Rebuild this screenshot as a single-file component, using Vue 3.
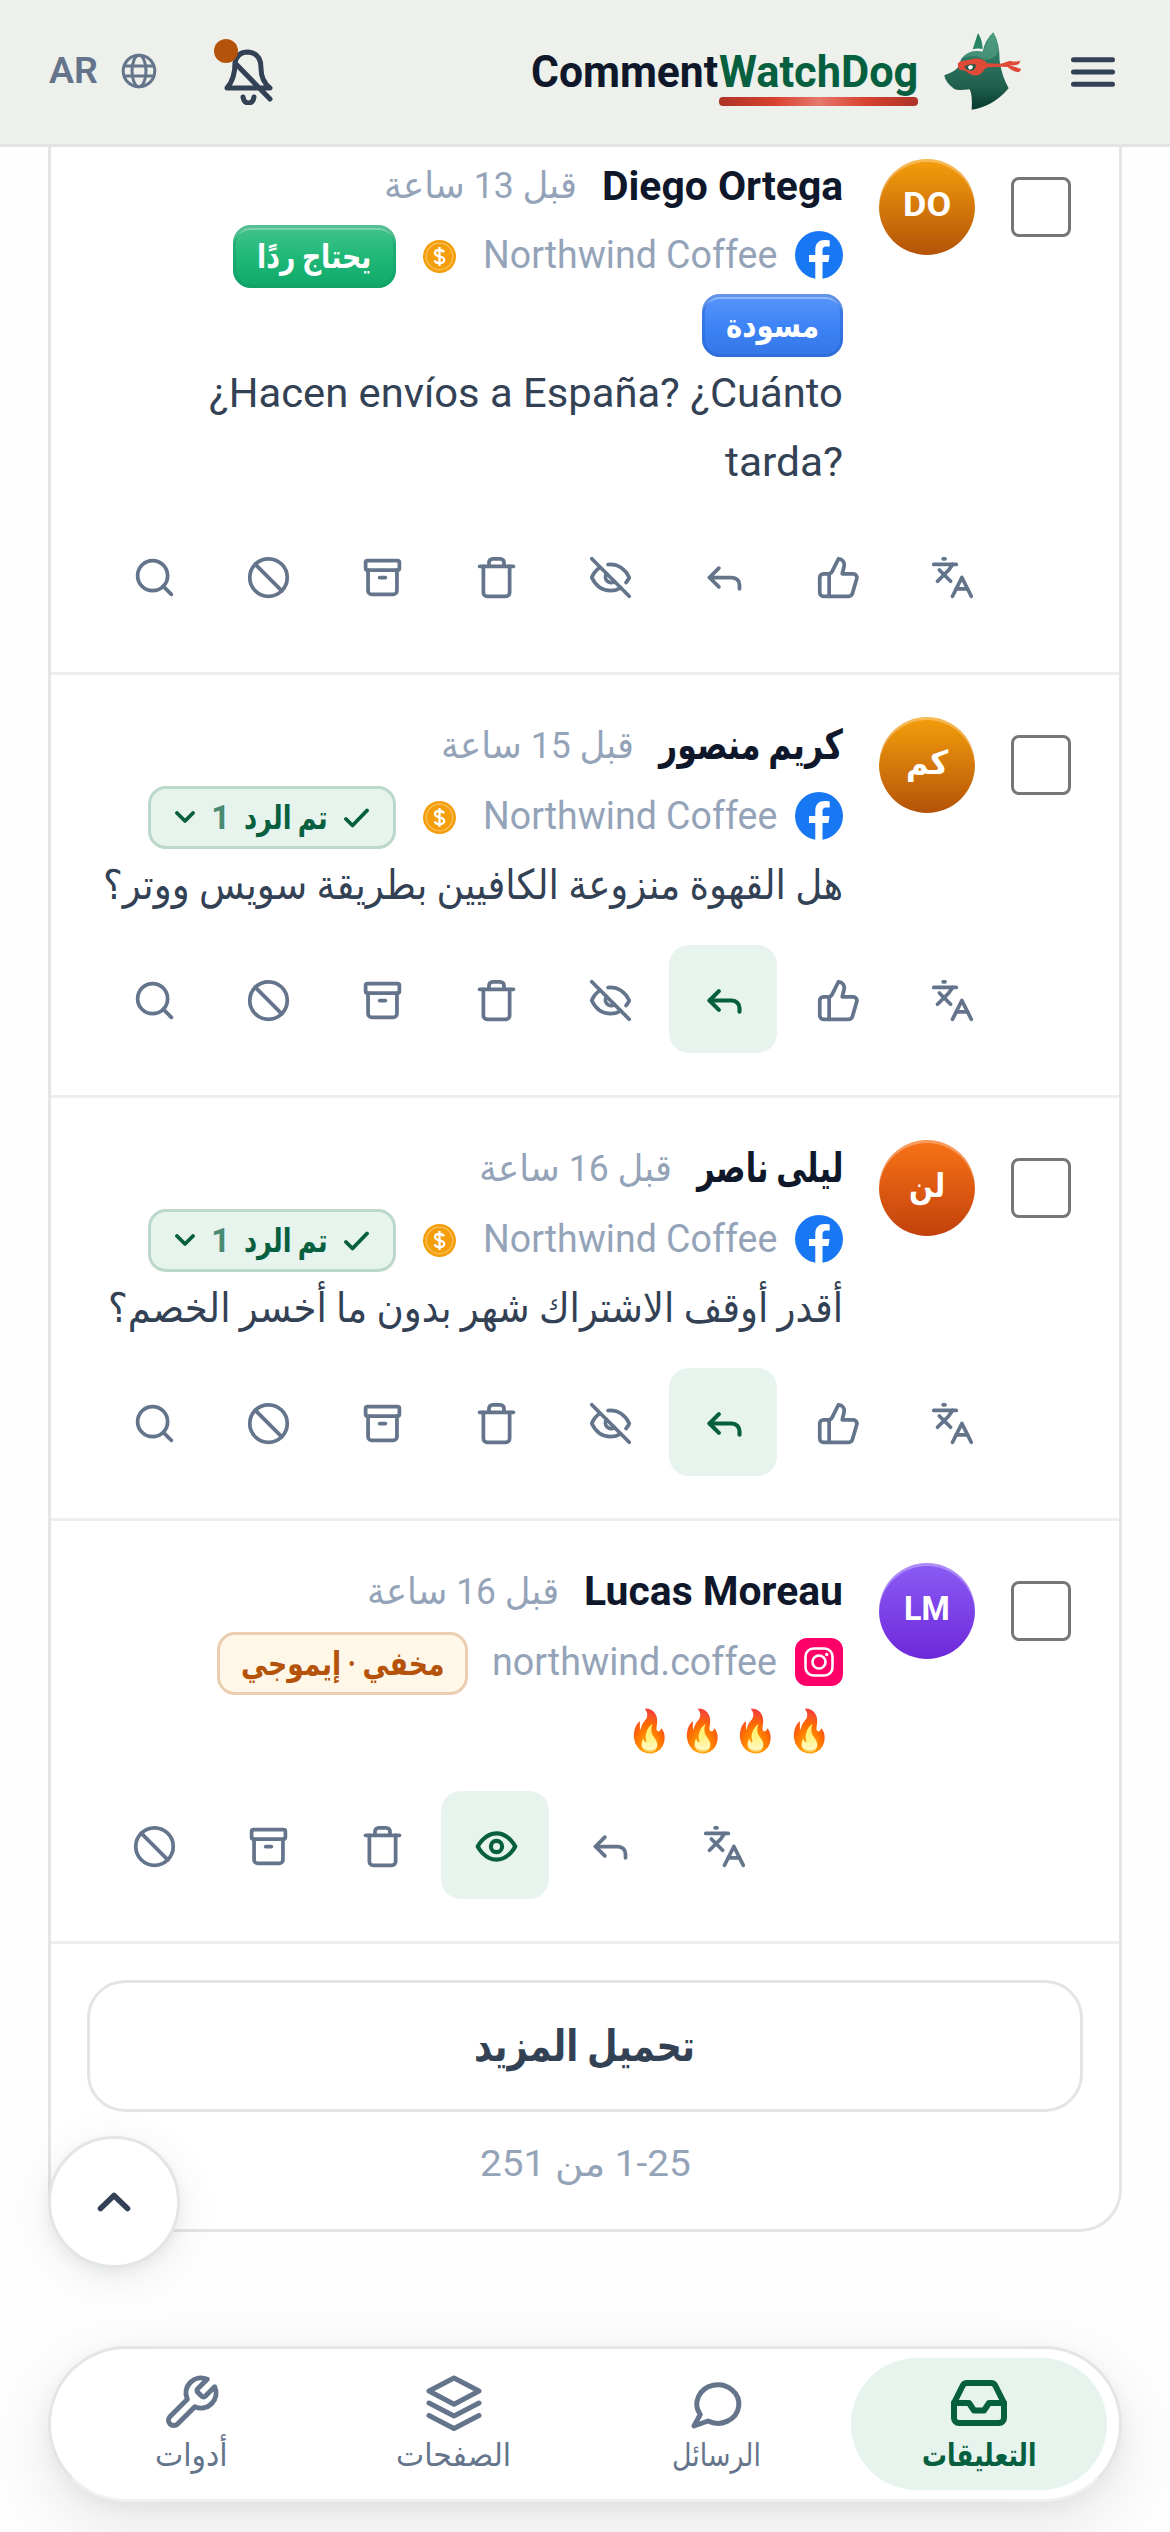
<script setup>
const vFit = (el, { value }) => {
  el.style.transform = 'none'
  el.style.marginLeft = '0'
  const natural = el.offsetWidth
  if (!natural) return
  el.style.transform = `scaleX(${value / natural})`
  el.style.marginLeft = `${value - natural}px`
}

const icons = {
  search: ['M11 3a8 8 0 1 0 0 16a8 8 0 1 0 0-16', 'm21 21-4.3-4.3'],
  ban: ['M12 2a10 10 0 1 0 0 20a10 10 0 1 0 0-20', 'm4.9 4.9 14.2 14.2'],
  archive: ['M4 3h16a1 1 0 0 1 1 1v3a1 1 0 0 1-1 1H4a1 1 0 0 1-1-1V4a1 1 0 0 1 1-1Z', 'M4.3 8v11a2 2 0 0 0 2 2h11.4a2 2 0 0 0 2-2V8', 'M10.5 12h3'],
  trash: ['M3 6h18', 'M19 6v14a2 2 0 0 1-2 2H7a2 2 0 0 1-2-2V6', 'M8 6V4a2 2 0 0 1 2-2h4a2 2 0 0 1 2 2v2'],
  eyeOff: ['M10.7 5.1C15.9 4.6 19.9 7.6 22 12c-.4 1-1 1.9-1.7 2.7', 'M6.3 6.7C4.4 8 2.9 9.8 2 12c2.1 4.4 5.7 7 10 7c2 0 3.8-.5 5.4-1.5', 'M9.9 9.9a3 3 0 0 0 4.2 4.2', 'm2 2 20 20'],
  eye: ['M2 12s3.5-7 10-7 10 7 10 7-3.5 7-10 7-10-7-10-7Z', 'M12 9a3 3 0 1 0 0 6a3 3 0 1 0 0-6'],
  reply: ['m9 17-5-5 5-5', 'M20 18v-2a4 4 0 0 0-4-4H4'],
  like: ['M7 10v12', 'M15 5.88 14 10h5.83a2 2 0 0 1 1.92 2.56l-2.33 8A2 2 0 0 1 17.5 22H4a2 2 0 0 1-2-2v-8a2 2 0 0 1 2-2h2.76a2 2 0 0 0 1.79-1.11L12 2a3.13 3.13 0 0 1 3 3.88Z'],
  translate: ['m5 8 6 6', 'm4 14 6-6 2-3', 'M2 5h12', 'M7 2h1', 'm22 22-5-10-5 10', 'M14 18h6'],
  inbox: ['M22 12h-6l-2 3h-4l-2-3H2', 'M5.45 5.11 2 12v6a2 2 0 0 0 2 2h16a2 2 0 0 0 2-2v-6l-3.45-6.89A2 2 0 0 0 16.76 4H7.24a2 2 0 0 0-1.79 1.11z'],
  chat: ['M3.2 21.2 5.7 16.6A8.4 7.7 0 1 1 8.8 19.2Z'],
  layers: ['m12 2 10 5.2-10 5.3L2 7.2Z', 'm2 12 10 5.2L22 12', 'm2 17 10 5.2L22 17'],
  wrench: ['M14.7 6.3a1 1 0 0 0 0 1.4l1.6 1.6a1 1 0 0 0 1.4 0l3.77-3.77a6 6 0 0 1-7.94 7.94l-6.91 6.91a2.12 2.12 0 0 1-3-3l6.91-6.91a6 6 0 0 1 7.94-7.94l-3.76 3.76z'],
}

const allActions = ['translate', 'like', 'reply', 'eyeOff', 'trash', 'archive', 'ban', 'search']

const comments = [
  {
    name: 'Diego Ortega', nameWidth: 241, time: 'قبل 13 ساعة', timeWidth: 193,
    initials: 'DO', initialsWidth: 48, tone: 'amber', network: 'facebook',
    page: 'Northwind Coffee', pageWidth: 294, ad: true, tight: true,
    badges: [{ kind: 'needs', text: 'يحتاج ردًا', width: 114 }, { kind: 'draft', text: 'مسودة', width: 93 }],
    lines: [{ text: '¿Hacen envíos a España? ¿Cuánto', width: 634 }, { text: 'tarda?', width: 118 }],
    actions: allActions, active: '',
  },
  {
    name: 'كريم منصور', nameWidth: 184, time: 'قبل 15 ساعة', timeWidth: 193,
    initials: 'كم', initialsWidth: 42, tone: 'amber', network: 'facebook',
    page: 'Northwind Coffee', pageWidth: 294, ad: true,
    badges: [{ kind: 'replied', text: 'تم الرد', width: 84 }],
    lines: [{ text: 'هل القهوة منزوعة الكافيين بطريقة سويس ووتر؟', width: 740 }],
    actions: allActions, active: 'reply',
  },
  {
    name: 'ليلى ناصر', nameWidth: 146, time: 'قبل 16 ساعة', timeWidth: 193,
    initials: 'لن', initialsWidth: 36, tone: 'orange', network: 'facebook',
    page: 'Northwind Coffee', pageWidth: 294, ad: true,
    badges: [{ kind: 'replied', text: 'تم الرد', width: 84 }],
    lines: [{ text: 'أقدر أوقف الاشتراك شهر بدون ما أخسر الخصم؟', width: 735 }],
    actions: allActions, active: 'reply',
  },
  {
    name: 'Lucas Moreau', nameWidth: 259, time: 'قبل 16 ساعة', timeWidth: 192,
    initials: 'LM', initialsWidth: 46, tone: 'violet', network: 'instagram',
    page: 'northwind.coffee', pageWidth: 285, ad: false,
    badges: [{ kind: 'hidden', text: 'مخفي · إيموجي', width: 203 }],
    lines: [{ text: '🔥 🔥 🔥 🔥', width: 205, emoji: true }],
    actions: ['translate', 'reply', 'eye', 'trash', 'archive', 'ban'], active: 'eye',
  },
]

const tabs = [
  { icon: 'inbox', text: 'التعليقات', width: 114, active: true },
  { icon: 'chat', text: 'الرسائل', width: 89 },
  { icon: 'layers', text: 'الصفحات', width: 115 },
  { icon: 'wrench', text: 'أدوات', width: 73 },
]
</script>

<template>
  <div class="screen" dir="rtl">
    <header class="topbar">
      <svg class="menu" viewBox="0 0 44 30"><path d="M2.5 2.7h39M2.5 15h39M2.5 27.3h39" /></svg>
      <svg class="dog" viewBox="45 38 234 234">
        <defs>
          <linearGradient id="fur" x1="0" y1="0" x2="0" y2="1">
            <stop offset="0" stop-color="#3b9478" /><stop offset=".45" stop-color="#286f5a" /><stop offset=".7" stop-color="#20604d" /><stop offset="1" stop-color="#07392e" />
          </linearGradient>
          <linearGradient id="ear" x1="0" y1="0" x2="0" y2="1">
            <stop offset="0" stop-color="#1d7a5c" /><stop offset="1" stop-color="#2c8b6b" />
          </linearGradient>
        </defs>
        <path d="M147 41 131 90q15-5 30-1Q160 62 147 41Z" fill="url(#ear)" />
        <path d="M193 39Q168 62 161 97Q120 88 97 118L87 143Q80 156 46 168Q48 183 62 197L76 209Q84 214 122 210Q131 228 128 271Q191 263 239 207Q219 172 212 125Q212 70 193 39Z" fill="url(#fur)" />
        <path d="M193 43Q171 66 164 98Q120 91 101 115Q145 102 166 122Q198 120 207 98Q206 66 193 43Z" fill="#68b197" opacity=".4" />
        <path d="M87 132Q89 125 122 121Q145 114 161 121Q171 125 173 132L216 133L243 124Q258 129 274 124L270 134Q258 140 238 138Q263 143 277 149L270 159Q249 156 236 143L217 142L177 144Q168 146 163 155Q150 174 128 166Q116 163 110 154L91 151Q85 147 87 132Z" fill="#df4a38" />
        <path d="M106 144Q115 132 139 135Q143 145 133 152Q118 158 106 144Z" fill="#1d5548" />
        <path d="m116 142 8-5 8 3-2 8-9 3Z" fill="#fff" />
      </svg>
      <div class="wordmark" dir="ltr">
        <span class="dark"><span v-fit="187">Comment</span></span><span class="green"><span v-fit="199">WatchDog</span></span>
      </div>
      <div class="bell">
        <svg viewBox="0 0 60 66">
          <path d="M21 24Q23 13 34 13Q47 14 47 29Q47 42 56 49H13Q21 40 21 24M21 24 56 60M29 58Q30 64 34.5 64Q39 64 40 58" />
        </svg>
        <i class="dot"></i>
      </div>
      <svg class="globe" viewBox="0 0 36 36">
        <circle cx="18" cy="18" r="15.8" /><ellipse cx="18" cy="18" rx="7" ry="15.8" /><path d="M3 13h30M3 23h30" />
      </svg>
      <span class="lang"><span v-fit="49">AR</span></span>
    </header>

    <main class="feed">
      <article v-for="c in comments" :key="c.initials" class="comment">
        <div class="top">
          <i class="check"></i>
          <div class="avatar" :class="c.tone"><span v-fit="c.initialsWidth">{{ c.initials }}</span></div>
          <div class="body">
            <div class="who" :class="{ tight: c.tight }">
              <strong v-fit="c.nameWidth" dir="auto">{{ c.name }}</strong>
              <span v-fit="c.timeWidth" class="time">{{ c.time }}</span>
            </div>
            <div class="meta">
              <svg v-if="c.network === 'facebook'" class="network" viewBox="0 0 48 48">
                <circle cx="24" cy="24" r="24" fill="#1877f2" />
                <path d="M20.3 48V31H14v-7h6.3v-5.5C20.3 12.2 24 9 29.7 9c2.6 0 4.3.3 5 .5v6h-3.2c-3.3 0-4 1.7-4 4V24h7l-1.1 7h-5.9v17Z" fill="#fff" />
              </svg>
              <svg v-else class="network" viewBox="0 0 48 48">
                <rect width="48" height="48" rx="12" fill="#ff0069" />
                <rect x="10.5" y="10.5" width="27" height="27" rx="8" fill="none" stroke="#fff" stroke-width="2.6" />
                <circle cx="24" cy="24" r="6.5" fill="none" stroke="#fff" stroke-width="2.6" />
                <circle cx="31.7" cy="16.5" r="1.7" fill="#fff" />
              </svg>
              <span v-fit="c.pageWidth" class="page" dir="ltr">{{ c.page }}</span>
              <svg v-if="c.ad" class="coin" viewBox="0 0 33 33">
                <circle cx="16.5" cy="16.5" r="16.5" fill="#f59e0b" />
                <circle cx="16.5" cy="16.5" r="13.3" fill="none" stroke="#fbc15c" stroke-width="1.3" />
                <path d="M21 12.3Q20 10 16.5 10Q12 10 12 13Q12 15.5 16.5 16.3Q21.2 17.2 21.2 20Q21.2 23 16.5 23Q12.5 23 11.7 20.3M16.5 7v19" fill="none" stroke="#fff" stroke-width="2.3" />
              </svg>
              <span v-for="b in c.badges" :key="b.kind" class="badge" :class="b.kind">
                <svg v-if="b.kind === 'replied'" class="tick" viewBox="0 0 25 20"><path d="m2 11 6.5 6.5L23 2.5" /></svg>
                <span v-fit="b.width">{{ b.text }}</span>
                <template v-if="b.kind === 'replied'">
                  <span class="count">1</span>
                  <svg class="caret" viewBox="0 0 20 13"><path d="m2 2 8 8 8-8" /></svg>
                </template>
              </span>
            </div>
            <p class="text" dir="auto">
              <span v-for="l in c.lines" :key="l.text" class="line" :class="{ emoji: l.emoji }"><span v-fit="l.width">{{ l.text }}</span></span>
            </p>
          </div>
        </div>
        <div class="actions">
          <button v-for="a in c.actions" :key="a" :class="{ on: a === c.active }">
            <svg viewBox="0 0 24 24"><path v-for="d in icons[a]" :key="d" :d="d" /></svg>
          </button>
        </div>
      </article>
      <footer class="more">
        <button class="load"><span v-fit="221">تحميل المزيد</span></button>
        <div class="range"><span v-fit="211">1-25 من 251</span></div>
      </footer>
    </main>

    <button class="to-top"><svg viewBox="0 0 34 20"><path d="m3.5 16.5 13.5-13 13.5 13" /></svg></button>

    <nav class="tabs">
      <a v-for="t in tabs" :key="t.icon" :class="{ on: t.active }">
        <svg viewBox="0 0 24 24"><path v-for="d in icons[t.icon]" :key="d" :d="d" /></svg>
        <span class="label"><span v-fit="t.width">{{ t.text }}</span></span>
      </a>
    </nav>
  </div>
</template>

<style>
html, body { background: #fefefe; overflow: hidden; }
</style>

<style scoped>
* { box-sizing: border-box; }
.screen {
  position: relative;
  width: 1170px;
  height: 2532px;
  overflow: hidden;
  font-family: Roboto, 'DejaVu Sans', 'Noto Color Emoji', sans-serif;
  color: #334155;
}
.screen span, .screen strong { white-space: nowrap; }
.who strong, .screen span span, .time, .page, .avatar span, .load span, .range span { display: inline-block; flex: none; transform-origin: right center; }
button { border: 0; background: none; padding: 0; font-family: inherit; }
svg { display: block; flex: none; }

.topbar {
  position: relative;
  z-index: 2;
  display: flex;
  align-items: center;
  height: 147px;
  padding: 0 55px 3px 49px;
  background: #edf0eb;
  border-bottom: 3px solid #e2e5e1;
}
.menu { width: 44px; height: 30px; margin-top: 3px; fill: none; stroke: #334155; stroke-width: 5; stroke-linecap: round; }
.dog { width: 78px; height: 78px; margin-right: 49px; }
.wordmark { display: flex; margin-right: 26px; margin-top: 3px; font-size: 44px; font-weight: 700; line-height: 60px; }
.dark { color: #0f172a; }
.green { position: relative; color: #065f3f; }
.green::after {
  content: '';
  position: absolute;
  z-index: -1;
  left: 0;
  right: 0;
  bottom: -4px;
  height: 9px;
  border-radius: 4px;
  background: linear-gradient(90deg, #ad3327, #d8412f 28%, #e5786c 50%, #d8412f 74%, #ad3327);
}
.bell { position: relative; width: 60px; height: 66px; margin-right: auto; margin-top: 2px; }
.bell svg { width: 60px; height: 66px; fill: none; stroke: #334155; stroke-width: 5; stroke-linecap: round; stroke-linejoin: round; }
.dot { position: absolute; left: 0; top: 0; width: 24px; height: 24px; border-radius: 50%; background: #b45309; }
.globe { width: 36px; height: 36px; margin-right: 57px; fill: none; stroke: #64748b; stroke-width: 3; }
.lang { margin-right: 23px; color: #64748b; font-size: 36px; font-weight: 600; line-height: 54px; }

.feed {
  width: 1074px;
  height: 2115px;
  margin: -30px 48px 0;
  border: 3px solid #e4e6e3;
  border-top: 0;
  border-radius: 0 0 42px 42px;
  background: #fff;
}
.comment { padding: 42px 48px; border-bottom: 3px solid #eeefed; }
.top { display: flex; gap: 36px; }
.check { flex: none; width: 60px; height: 60px; margin-top: 18px; border: 3px solid #767676; border-radius: 8px; }
.avatar {
  display: flex;
  flex: none;
  align-items: center;
  justify-content: center;
  width: 96px;
  height: 96px;
  padding-bottom: 4px;
  border-radius: 50%;
  color: #fff;
  font-size: 33px;
  font-weight: 700;
  line-height: 48px;
  box-shadow: inset 0 3px 0 rgba(255, 255, 255, .3);
}
.amber { background: linear-gradient(#f59e0b, #b45309); }
.orange { background: linear-gradient(#f97316, #c2410c); }
.violet { background: linear-gradient(#8b5cf6, #6d28d9); }
.body { flex: 1; min-width: 0; }
.who { display: flex; gap: 25px; height: 57px; margin-bottom: 12px; line-height: 57px; }
.who.tight { height: 54px; line-height: 54px; }
.who strong { color: #0f172a; font-size: 41px; font-weight: 700; }
.time { color: #94a3b8; font-size: 37px; }
.meta { display: flex; flex-wrap: wrap; align-items: center; row-gap: 6px; min-height: 63px; }
.network { width: 48px; height: 48px; margin-bottom: 3px; }
.page { margin-right: 18px; margin-bottom: 4px; color: #94a3b8; font-size: 38px; line-height: 54px; }
.coin { width: 33px; height: 33px; margin-right: 27px; }
.badge {
  display: flex;
  align-items: center;
  height: 63px;
  margin-right: 27px;
  padding: 0 24px;
  border-radius: 18px;
  font-size: 33px;
  font-weight: 700;
  line-height: 57px;
}
.page + .badge { margin-right: 24px; }
.needs { color: #fff; background: linear-gradient(#45c48e, #1fb877 50%, #10a86a); box-shadow: inset 0 0 0 3px rgba(16, 150, 96, .35), inset 0 6px 0 -1px rgba(255, 255, 255, .3); }
.draft { margin-right: 0; color: #fff; background: linear-gradient(#5a96fb, #3b82f6 55%, #3676e5); box-shadow: inset 0 0 0 3px rgba(37, 99, 205, .45), inset 0 6px 0 -1px rgba(255, 255, 255, .35); }
.replied { width: 248px; padding: 0 24px; color: #065f3f; background: #e7f3ed; border: 3px solid #bcd8cb; }
.hidden { color: #b45309; background: #fff8e8; border: 3px solid #ebceb1; padding: 0 21px; }
.tick { width: 25px; height: 20px; margin-left: 16px; }
.caret { width: 20px; height: 13px; margin-right: auto; }
.tick path, .caret path { fill: none; stroke: #065f3f; stroke-width: 3.8; stroke-linecap: round; stroke-linejoin: round; }
.count { margin-right: 14px; opacity: .7; }
.text { margin: 2px 0 25px; color: #334155; font-size: 41px; line-height: 69px; text-align: right; }
.line { display: block; height: 69px; }
.line.emoji { padding-right: 11px; }
.actions { display: flex; gap: 6px; justify-content: flex-end; }
.actions button {
  display: flex;
  align-items: center;
  justify-content: center;
  width: 108px;
  height: 108px;
  padding: 3px 0 0 2px;
  border-radius: 20px;
}
.actions svg { width: 45px; height: 45px; }
.actions path { fill: none; stroke: #64748b; stroke-width: 2; stroke-linecap: round; stroke-linejoin: round; }
.actions .on { background: #e7f3ed; }
.actions .on path { stroke: #065f3f; stroke-width: 2.2; }

.more { padding: 36px; }
.load {
  display: flex;
  align-items: center;
  justify-content: center;
  width: 996px;
  height: 132px;
  border: 3px solid #e3e5e2;
  border-radius: 38px;
  color: #334155;
  font-size: 43px;
  font-weight: 700;
  line-height: 60px;
}
.range { margin-top: 25px; text-align: center; color: #94a3b8; font-size: 36px; line-height: 54px; }

.to-top {
  position: absolute;
  left: 48px;
  top: 2136px;
  display: flex;
  align-items: center;
  justify-content: center;
  width: 132px;
  height: 132px;
  border: 3px solid #e4e6e3;
  border-radius: 50%;
  background: #fff;
  box-shadow: 0 10px 45px rgba(15, 23, 42, .08), 0 5px 12px rgba(15, 23, 42, .05);
}
.to-top svg { width: 34px; height: 20px; fill: none; stroke: #334155; stroke-width: 5.6; stroke-linecap: round; stroke-linejoin: round; }

.tabs {
  position: absolute;
  left: 48px;
  right: 48px;
  top: 2346px;
  display: flex;
  gap: 6px;
  height: 156px;
  padding: 9px 12px;
  border: 3px solid #e4e6e3;
  border-bottom-color: #f0f0ef;
  border-radius: 78px;
  background: #fff;
  box-shadow: 0 24px 72px rgba(15, 23, 42, .1), 0 6px 18px rgba(15, 23, 42, .05);
}
.tabs a { display: flex; flex: 1; flex-direction: column; align-items: center; padding-top: 15px; border-radius: 66px; color: #64748b; }
.tabs svg { width: 60px; height: 60px; fill: none; stroke: currentColor; stroke-width: 2; stroke-linecap: round; stroke-linejoin: round; }
.tabs .on { background: #e7f3ed; color: #065f3f; }
.tabs .on svg { stroke-width: 2.4; }
.label { font-size: 32px; line-height: 44px; }
.tabs .on .label { font-weight: 700; }
</style>
